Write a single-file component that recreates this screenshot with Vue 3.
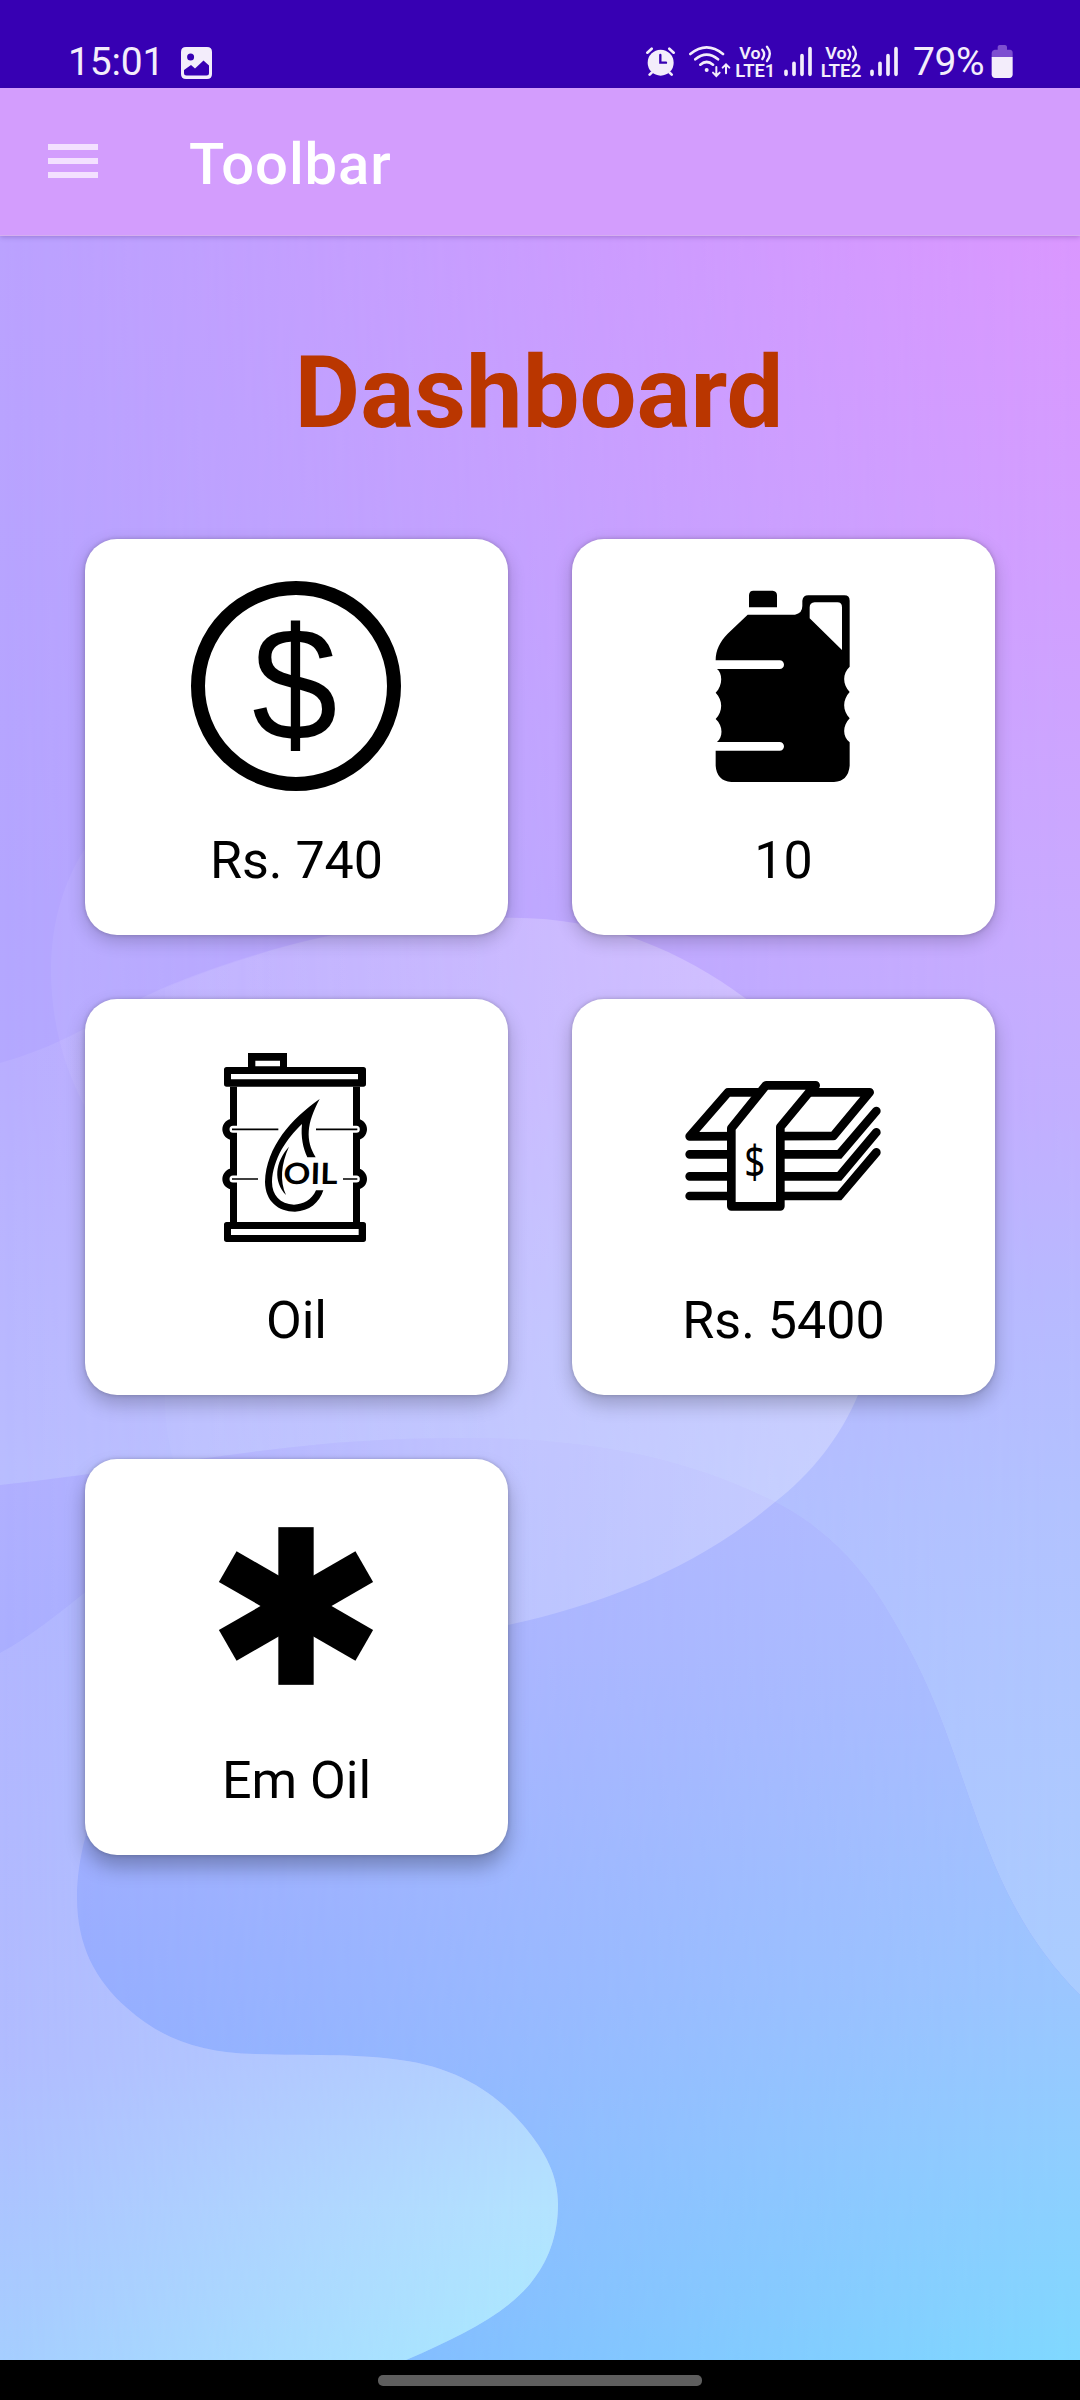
<script setup>
const cards = [
  { id: 'cash', icon: 'coin', label: 'Rs. 740' },
  { id: 'cans', icon: 'jug', label: '10' },
  { id: 'oil', icon: 'barrel', label: 'Oil' },
  { id: 'total', icon: 'money', label: 'Rs. 5400' },
  { id: 'em', icon: 'asterisk', label: 'Em Oil' },
]
</script>

<template>
  <div class="screen">
    <header class="status">
      <span class="time">15:01</span>
      <svg class="pic" width="31" height="32" viewBox="0 0 31 32">
        <path fill="#f3edfb" fill-rule="evenodd" d="M5 0H26Q31 0 31 5V27Q31 32 26 32H5Q0 32 0 27V5Q0 0 5 0ZM9.600 6.500A3.500 3.500 0 1 0 9.600 13.500A3.500 3.500 0 1 0 9.600 6.500ZM3 23V26Q3 28.500 5.500 28.500H25.500Q28 28.500 28 26V18.500L22.500 13.500L14 21.500L10 18Z" />
      </svg>
      <div class="indicators">
        <svg width="41" height="36" viewBox="78 72 123 108">
          <g fill="none" stroke="#f3edfb" stroke-width="8" stroke-linecap="round">
            <path d="M82 98L95 86M161 98L148 86M95 158L89 164M149 158L155 164" />
          </g>
          <circle cx="122" cy="128" r="39" fill="#f3edfb" />
          <path d="M121 105V128H138" fill="none" stroke="#3700b3" stroke-width="7" stroke-linecap="round" />
        </svg>
        <svg width="48" height="36" viewBox="201 72 144 108">
          <g fill="none" stroke="#f3edfb" stroke-width="8" stroke-linecap="round">
            <path d="M211 102Q260 62 309 102M226 118Q260 90 294 118M241 134Q260 118 279 134" />
            <path stroke-width="6" d="M289 141V167M279 158L289 168L299 158M318 160V134M308 143L318 133L328 143" />
          </g>
          <circle cx="260" cy="150" r="6" fill="#f3edfb" />
        </svg>
        <svg width="45" height="36" viewBox="345 72 135 108">
          <g class="lte">
            <text x="358" y="117" font-size="51" textLength="64" lengthAdjust="spacingAndGlyphs">Vo</text>
            <text x="346" y="170" font-size="53" textLength="120" lengthAdjust="spacingAndGlyphs">LTE1</text>
          </g>
          <path class="waves" d="M427 89Q438 102 427 117M441 80Q458 101 441 123" />
        </svg>
        <svg width="40" height="36" viewBox="480 72 120 108">
          <path class="bars" d="M498 154V163M522 130V163M546 107V163M570 86V163" />
        </svg>
        <svg width="46" height="36" viewBox="600 72 138 108">
          <g class="lte">
            <text x="616" y="117" font-size="51" textLength="64" lengthAdjust="spacingAndGlyphs">Vo</text>
            <text x="602" y="170" font-size="53" textLength="122" lengthAdjust="spacingAndGlyphs">LTE2</text>
          </g>
          <path class="waves" d="M685 89Q696 102 685 117M699 80Q716 101 699 123" />
        </svg>
        <svg width="46" height="36" viewBox="738 72 138 108">
          <path class="bars" d="M756 154V163M780 130V163M804 107V163M828 86V163" />
        </svg>
        <span class="percent">79%</span>
        <svg width="22" height="36" viewBox="1111 72 66 108">
          <path fill="#7d4fd0" d="M1113 112V98Q1114 90 1122 89H1131V80Q1132 75 1137 75H1153Q1158 76 1159 80V89H1168Q1176 90 1176 98V112Z" />
          <path fill="#f3edfb" d="M1113 111H1176V164Q1175 173 1166 174H1123Q1114 173 1113 164Z" />
        </svg>
      </div>
    </header>

    <div class="toolbar">
      <div class="menu"><i></i><i></i><i></i></div>
      <span class="title">Toolbar</span>
    </div>

    <main class="content">
      <svg class="wallpaper" width="1080" height="2124" viewBox="0 236 1080 2124" preserveAspectRatio="none">
        <defs>
          <linearGradient id="fade"><stop offset="0" stop-color="#000" /><stop offset="1" stop-color="#fff" /></linearGradient>
          <linearGradient id="fadeHalf" gradientUnits="userSpaceOnUse" x1="0" y1="0" x2="558" y2="0"><stop offset="0" stop-color="#000" /><stop offset="1" stop-color="#fff" /></linearGradient>
          <mask id="across" maskUnits="userSpaceOnUse" x="0" y="236" width="1080" height="2124"><rect y="236" width="1080" height="2124" fill="url(#fade)" /></mask>
          <mask id="acrossHalf" maskUnits="userSpaceOnUse" x="0" y="236" width="1080" height="2124"><rect y="236" width="1080" height="2124" fill="url(#fadeHalf)" /></mask>
          <linearGradient id="skyL" gradientUnits="userSpaceOnUse" x1="0" y1="236" x2="0" y2="2000">
            <stop offset="0" stop-color="#bba2ff" /><stop offset=".38" stop-color="#b4a6ff" /><stop offset=".48" stop-color="#b4a9ff" /><stop offset=".7" stop-color="#b4b8ff" /><stop offset="1" stop-color="#a8bcff" />
          </linearGradient>
          <linearGradient id="skyR" gradientUnits="userSpaceOnUse" x1="0" y1="236" x2="0" y2="2000">
            <stop offset="0" stop-color="#da97ff" /><stop offset=".2" stop-color="#d19fff" /><stop offset=".4" stop-color="#c8abff" /><stop offset=".5" stop-color="#c2afff" /><stop offset=".6" stop-color="#b8b9ff" /><stop offset=".72" stop-color="#b2c2ff" /><stop offset="1" stop-color="#aacdff" />
          </linearGradient>
          <linearGradient id="seaL" gradientUnits="userSpaceOnUse" x1="0" y1="1438" x2="0" y2="2360">
            <stop offset="0" stop-color="#b2b0ff" /><stop offset=".22" stop-color="#abafff" /><stop offset=".57" stop-color="#98acff" /><stop offset="1" stop-color="#86aeff" />
          </linearGradient>
          <linearGradient id="seaR" gradientUnits="userSpaceOnUse" x1="0" y1="1438" x2="0" y2="2360">
            <stop offset="0" stop-color="#b2bcff" /><stop offset=".3" stop-color="#a8beff" /><stop offset=".6" stop-color="#9bc6ff" /><stop offset="1" stop-color="#80d8ff" />
          </linearGradient>
          <linearGradient id="bayL" gradientUnits="userSpaceOnUse" x1="0" y1="1600" x2="0" y2="2360">
            <stop offset="0" stop-color="#b3b6ff" /><stop offset=".6" stop-color="#b1bcff" /><stop offset="1" stop-color="#a6ceff" />
          </linearGradient>
          <linearGradient id="bayR" gradientUnits="userSpaceOnUse" x1="0" y1="1600" x2="0" y2="2360">
            <stop offset="0" stop-color="#a8c4ff" /><stop offset=".6" stop-color="#b3d3ff" /><stop offset=".8" stop-color="#b3e3ff" /><stop offset="1" stop-color="#aaeaff" />
          </linearGradient>
          <linearGradient id="mist" gradientUnits="userSpaceOnUse" x1="0" y1="0" x2="500" y2="0">
            <stop offset="0" stop-color="#fff" stop-opacity=".07" /><stop offset=".4" stop-color="#fff" stop-opacity=".1" /><stop offset="1" stop-color="#fff" stop-opacity="0" />
          </linearGradient>
          <linearGradient id="bubble" gradientUnits="userSpaceOnUse" x1="165" y1="0" x2="860" y2="0">
            <stop offset="0" stop-color="#fff" stop-opacity=".03" /><stop offset=".5" stop-color="#fff" stop-opacity=".2" /><stop offset="1" stop-color="#fff" stop-opacity=".27" />
          </linearGradient>
          <linearGradient id="ring" gradientUnits="userSpaceOnUse" x1="51" y1="0" x2="300" y2="0">
            <stop offset="0" stop-color="#fff" stop-opacity=".06" /><stop offset="1" stop-color="#fff" stop-opacity="0" />
          </linearGradient>
        </defs>
        <rect y="236" width="1080" height="2124" fill="url(#skyL)" />
        <rect y="236" width="1080" height="2124" fill="url(#skyR)" mask="url(#across)" />
        <path fill="url(#ring)" d="M300 790H170C100 800 51 880 51 969C51 1030 68 1080 95 1125C130 1180 200 1200 300 1200Z" />
        <path fill="url(#mist)" d="M0 1063C75 1042 110 1010 170 985C300 933 400 918 500 918V1500H0Z" />
        <path fill="url(#seaL)" d="M0 1485C90 1475 180 1461 260 1451C350 1440 400 1438 480 1438C600 1440 690 1460 775 1502C815 1522 853 1556 881 1600C905 1638 926 1679 944 1727C962 1775 979 1830 999 1875C1020 1922 1047 1962 1080 1995V2360H0Z" />
        <path fill="url(#seaR)" mask="url(#across)" d="M0 1485C90 1475 180 1461 260 1451C350 1440 400 1438 480 1438C600 1440 690 1460 775 1502C815 1522 853 1556 881 1600C905 1638 926 1679 944 1727C962 1775 979 1830 999 1875C1020 1922 1047 1962 1080 1995V2360H0Z" />
        <path fill="url(#bubble)" d="M165 988C300 933 400 918 500 918C600 915 680 950 745 998C830 1062 880 1150 880 1250C880 1310 872 1360 858 1395C840 1438 811 1474 775 1502C700 1565 610 1603 508 1625C330 1660 163 1560 165 1396Z" />
        <path fill="url(#bayL)" d="M0 1653C30 1637 58 1614 88 1590L150 1640C120 1760 77 1820 77 1898C77 1945 95 1980 127 2008C160 2038 200 2053 255 2054C310 2056 350 2053 400 2060C455 2067 495 2092 523 2125C546 2152 558 2176 558 2204C558 2236 548 2262 530 2284C503 2316 458 2337 406 2360H0Z" />
        <path fill="url(#bayR)" mask="url(#acrossHalf)" d="M0 1653C30 1637 58 1614 88 1590L150 1640C120 1760 77 1820 77 1898C77 1945 95 1980 127 2008C160 2038 200 2053 255 2054C310 2056 350 2053 400 2060C455 2067 495 2092 523 2125C546 2152 558 2176 558 2204C558 2236 548 2262 530 2284C503 2316 458 2337 406 2360H0Z" />
      </svg>

      <h1>Dashboard</h1>

      <section class="grid">
        <article v-for="card in cards" :key="card.id" class="card">
          <svg v-if="card.icon === 'coin'" class="icon" viewBox="363 183 630 630">
            <circle cx="678" cy="498" r="294" fill="none" stroke="#000" stroke-width="42" />
            <text transform="translate(674 661) scale(.95 1)" text-anchor="middle" font-family="'Liberation Sans', Arial, sans-serif" font-size="485">$</text>
          </svg>
          <svg v-else-if="card.icon === 'jug'" class="icon" viewBox="354 183 630 630">
            <path d="M567 262V225Q568 212 580 212H638Q650 213 651 225V262Z" />
            <path fill-rule="evenodd" d="M563 284H705Q727 280 727 258V242Q729 226 745 226H853Q869 226 869 242V440C847 460 847 494 869 516C847 540 847 572 869 595C847 618 847 650 869 667V737Q865 783 822 786H514Q470 782 467 737V692H659A13 13 0 0 0 659 666H471C490 650 489 616 467 597C489 575 489 540 467 518C489 496 488 460 471 447H659A13 13 0 0 0 659 421H467C467 390 480 365 503 341ZM749 295L846 390V262Q846 247 832 247H764Q749 248 749 262Z" />
          </svg>
          <svg v-else-if="card.icon === 'barrel'" class="icon" viewBox="363 183 630 630">
            <path fill-rule="evenodd" d="M534 219H651V262H534ZM556 242V259H630V242Z" />
            <path fill-rule="evenodd" d="M470 261H880Q888 261 888 269V312Q888 320 880 320H470Q462 320 462 312V269Q462 261 470 261ZM483 282V298H864V282Z" />
            <path fill-rule="evenodd" d="M470 726H880Q888 726 888 734V778Q888 786 880 786H470Q462 786 462 778V734Q462 726 470 726ZM483 747V765H866V747Z" />
            <path d="M480 320H501V726H480ZM849 320H870V726H849Z" />
            <path d="M501 480H489A32 32 0 0 1 489 416H501ZM501 629H489A32 32 0 0 1 489 565H501ZM849 416H859A32 32 0 0 1 859 480H849ZM849 565H859A32 32 0 0 1 859 629H849Z" />
            <path fill="none" stroke="#fff" stroke-width="21" stroke-linecap="round" d="M489 448H510M489 597H510M859 448H840M859 597H840" />
            <path fill="none" stroke="#000" stroke-width="5" d="M486 448H625M738 448H862M486 597H564M819 597H862" />
            <path d="M749 357C665 416 588 500 585 606C586 664 625 695 675 695C718 694 748 668 760 631H738C725 660 700 673 672 674C630 672 606 645 606 606C608 538 650 475 696 432C692 470 699 505 712 532H737C706 480 709 432 749 357Z" />
            <path d="M657 500C614 548 610 604 648 645C629 603 633 553 657 500Z" />
            <text transform="translate(640 612) skewX(-1.500)" font-family="Lato, sans-serif" font-weight="700" font-size="88" textLength="162" lengthAdjust="spacingAndGlyphs">OIL</text>
          </svg>
          <svg v-else-if="card.icon === 'money'" class="icon" viewBox="354 183 630 630">
            <g fill="none" stroke="#000" stroke-width="26" stroke-linecap="round" stroke-linejoin="round">
              <path d="M389 469L504 337H929L820 468Z" />
              <path stroke-linejoin="miter" d="M389 523H838L949 393M389 589H838L949 457M389 648H838L949 517" />
              <path fill="#fff" d="M514 679V445L618 316H767L753 330L661 441V679Z" />
            </g>
            <text transform="translate(584 594) scale(.82 1)" text-anchor="middle" font-family="'Noto Sans', sans-serif" font-size="134">$</text>
          </svg>
          <svg v-else class="icon" viewBox="363 183 630 630">
            <rect v-for="a in [0, 60, 120]" :key="a" x="625" y="261.500" width="106" height="473" :transform="`rotate(${a} 678 498)`" />
          </svg>
          <p>{{ card.label }}</p>
        </article>
      </section>
    </main>

    <footer class="navbar"><span></span></footer>
  </div>
</template>

<style>
body {
  background: #000;
}
</style>

<style scoped>
.screen {
  width: 1080px;
  height: 2400px;
  display: flex;
  flex-direction: column;
  overflow: hidden;
  font-family: Roboto, sans-serif;
}
.status {
  box-sizing: border-box;
  height: 88px;
  padding: 35px 67px 0 68px;
  display: flex;
  align-items: center;
  background: #3700b3;
  color: #f3edfb;
}
.time {
  width: 113px;
  font-size: 39px;
  line-height: 52px;
  letter-spacing: -0.2px;
}
.pic {
  margin-top: 2px;
}
.indicators {
  margin-left: auto;
  display: flex;
  align-items: center;
}
.percent {
  width: 79px;
  font-size: 39px;
  line-height: 52px;
  letter-spacing: -0.4px;
  text-align: left;
  text-indent: 1px;
  white-space: nowrap;
}
.lte text {
  fill: #f3edfb;
  font-family: Roboto, sans-serif;
  font-weight: 600;
}
.waves {
  fill: none;
  stroke: #f3edfb;
  stroke-width: 7;
  stroke-linecap: round;
}
.bars {
  fill: none;
  stroke: #f3edfb;
  stroke-width: 11;
  stroke-linecap: round;
}
.toolbar {
  position: relative;
  z-index: 1;
  box-sizing: border-box;
  height: 148px;
  padding-left: 48px;
  display: flex;
  align-items: center;
  background: #d39dfd;
  border-bottom: 1px solid #d5aef0;
  box-shadow: 0 1px 5px rgba(60, 20, 110, 0.28);
  color: #fff;
}
.menu {
  width: 50px;
  margin: -1px 91px 0 0;
  display: grid;
  gap: 8.500px;
}
.menu i {
  height: 5.500px;
  background: #f3e0ff;
}
.title {
  font-size: 58px;
  font-weight: 500;
  line-height: 70px;
  padding-top: 4px;
  letter-spacing: 0.9px;
}
.content {
  position: relative;
  flex: 1;
  display: flex;
  flex-direction: column;
}
.wallpaper {
  position: absolute;
  inset: 0;
}
h1 {
  position: relative;
  margin: 97px 2px 0 0;
  height: 120px;
  line-height: 120px;
  font-size: 101px;
  font-weight: 700;
  color: #ba3600;
  text-align: center;
}
.grid {
  position: relative;
  margin: 86px 85px 0;
  display: grid;
  grid-template-columns: 423px 423px;
  grid-auto-rows: 396px;
  gap: 64px;
}
.card {
  box-sizing: border-box;
  padding-top: 42px;
  display: flex;
  flex-direction: column;
  align-items: center;
  border-radius: 32px;
  background: #fff;
  box-shadow: 0 0 4px rgba(0, 0, 0, 0.2), 0 6px 18px rgba(0, 0, 0, 0.2);
}
.card:nth-child(n + 3) {
  box-shadow: 0 0 4px rgba(0, 0, 0, 0.2), 0 9px 19px rgba(0, 0, 0, 0.23);
}
.card:nth-child(n + 5) {
  box-shadow: 0 0 4px rgba(0, 0, 0, 0.2), 0 12px 20px rgba(0, 0, 0, 0.28);
}
.icon {
  width: 210px;
  height: 210px;
  margin-right: 1px;
}
p {
  margin: 39px 0 0;
  font-size: 52px;
  line-height: 62px;
  color: #000;
}
.navbar {
  height: 40px;
  display: flex;
  justify-content: center;
  align-items: center;
  background: #000;
}
.navbar span {
  width: 324px;
  height: 11px;
  border-radius: 5px;
  background: #5e5e5e;
}
</style>
